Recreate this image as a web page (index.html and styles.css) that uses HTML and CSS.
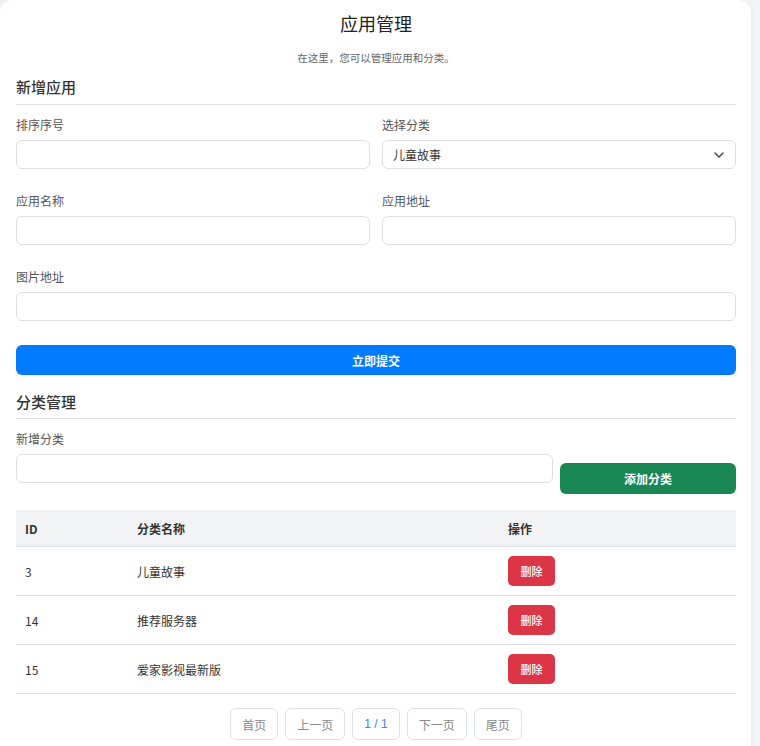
FILE: index.html
```html
<!DOCTYPE html>
<html lang="zh-CN">
<head>
  <meta charset="UTF-8">
  <meta name="viewport" content="width=device-width, initial-scale=1.0">
  <title>应用管理</title>
  <link rel="stylesheet" href="styles.css">
</head>
<body>
  <div class="container">
    <h1>应用管理</h1>
    <p class="subtitle">在这里，您可以管理应用和分类。</p>

    <h2 class="section-title">新增应用</h2>
    <form id="app-form">
      <div class="form-row">
        <div class="form-group">
          <label for="sort">排序序号</label>
          <input type="text" id="sort" name="sort">
        </div>
        <div class="form-group">
          <label for="category">选择分类</label>
          <div class="select-wrap">
            <select id="category" name="category">
              <option>儿童故事</option>
              <option>推荐服务器</option>
              <option>爱家影视最新版</option>
            </select>
            <svg class="select-arrow" width="10" height="6" viewBox="0 0 10 6"><path d="M1 1l4 4 4-4" fill="none" stroke="#343a40" stroke-width="1.3" stroke-linecap="round" stroke-linejoin="round"/></svg>
          </div>
        </div>
      </div>
      <div class="form-row">
        <div class="form-group">
          <label for="name">应用名称</label>
          <input type="text" id="name" name="name">
        </div>
        <div class="form-group">
          <label for="url">应用地址</label>
          <input type="text" id="url" name="url">
        </div>
      </div>
      <div class="form-group last">
        <label for="img">图片地址</label>
        <input type="text" id="img" name="img">
      </div>
      <button type="submit" class="btn btn-primary btn-block">立即提交</button>
    </form>

    <h2 class="section-title section-gap">分类管理</h2>
    <div class="category-add">
      <div class="form-group grow">
        <label for="new-cat">新增分类</label>
        <input type="text" id="new-cat" name="new-cat">
      </div>
      <button type="button" class="btn btn-success add-cat">添加分类</button>
    </div>

    <table class="cat-table">
      <thead>
        <tr>
          <th class="col-id">ID</th>
          <th class="col-name">分类名称</th>
          <th>操作</th>
        </tr>
      </thead>
      <tbody>
        <tr>
          <td>3</td>
          <td>儿童故事</td>
          <td><button type="button" class="btn btn-danger">删除</button></td>
        </tr>
        <tr>
          <td>14</td>
          <td>推荐服务器</td>
          <td><button type="button" class="btn btn-danger">删除</button></td>
        </tr>
        <tr>
          <td>15</td>
          <td>爱家影视最新版</td>
          <td><button type="button" class="btn btn-danger">删除</button></td>
        </tr>
      </tbody>
    </table>

    <div class="pagination">
      <button type="button" class="page-btn">首页</button>
      <button type="button" class="page-btn">上一页</button>
      <span class="page-btn current">1 / 1</span>
      <button type="button" class="page-btn">下一页</button>
      <button type="button" class="page-btn">尾页</button>
    </div>
  </div>
</body>
</html>
```

FILE: styles.css
```css
body {
  margin: 0;
  background: #f3f4f6;
  font-family: "Noto Sans CJK SC", "Noto Sans", sans-serif;
  color: #333;
}
.container {
  width: 751px;
  box-sizing: border-box;
  background: #fff;
  border-radius: 12px;
  padding: 10px 15px 20px 16px;
  box-shadow: 0 0 6px rgba(0, 0, 0, 0.06);
}
h1 {
  text-align: center;
  font-size: 18px;
  font-weight: 400;
  line-height: 27px;
  margin: 0;
  color: #222;
}
.subtitle {
  text-align: center;
  font-size: 10.5px;
  line-height: 16px;
  color: #666;
  margin: 13px 0 10px;
}
.section-title {
  font-size: 15px;
  font-weight: 500;
  line-height: 22px;
  margin: 0 0 11px;
  padding-bottom: 6px;
  border-bottom: 1px solid #dee2e6;
  color: #333;
}
.section-gap {
  margin-top: 16px;
  padding-bottom: 5px;
}
.form-row {
  display: flex;
  gap: 12px;
}
.form-row .form-group {
  flex: 1;
}
.form-group {
  margin-bottom: 23px;
}
.form-group.last {
  margin-bottom: 24px;
}
label {
  display: block;
  font-size: 12px;
  line-height: 18px;
  color: #555;
  margin-bottom: 6px;
}
input[type="text"],
select {
  display: block;
  width: 100%;
  height: 29px;
  box-sizing: border-box;
  padding: 0 10px;
  border: 1px solid #dcdfe4;
  border-radius: 6px;
  font-family: inherit;
  font-size: 12px;
  color: #333;
  background: #fff;
  outline: none;
}
.select-wrap {
  position: relative;
}
select {
  -webkit-appearance: none;
  appearance: none;
}
.select-arrow {
  position: absolute;
  right: 12px;
  top: 12px;
  pointer-events: none;
}
.btn {
  border: none;
  border-radius: 6px;
  color: #fff;
  font-family: inherit;
  font-size: 12px;
  font-weight: 700;
  cursor: pointer;
}
.btn-block {
  display: block;
  width: 100%;
  height: 30px;
}
.btn-primary {
  background: #007bff;
}
.btn-primary:hover {
  background: #0069d9;
}
.btn-success {
  background: #198754;
}
.btn-danger {
  background: #dc3545;
  font-size: 11px;
  font-weight: 500;
  width: 47px;
  height: 30px;
  border-radius: 5px;
}
.category-add {
  display: flex;
  align-items: flex-start;
  gap: 7px;
}
.grow {
  flex: 1;
  margin-bottom: 27px;
}
.add-cat {
  width: 176px;
  height: 31px;
  margin-top: 33px;
}
.cat-table {
  width: 100%;
  border-collapse: collapse;
  font-size: 12px;
}
.cat-table th {
  background: #f1f3f5;
  text-align: left;
  font-weight: 700;
  height: 36px;
  padding: 0 9px;
  color: #333;
  border-bottom: 1px solid #dee2e6;
}
.cat-table td {
  height: 48px;
  padding: 0 9px;
  border-bottom: 1px solid #dee2e6;
  color: #333;
}
.col-id {
  width: 94px;
}
.col-name {
  width: 353px;
}
.pagination {
  display: flex;
  justify-content: center;
  gap: 7px;
  margin-top: 14px;
}
.page-btn {
  display: inline-flex;
  align-items: center;
  justify-content: center;
  height: 32px;
  box-sizing: border-box;
  padding: 0 11px;
  border: 1px solid #dee2e6;
  border-radius: 6px;
  background: #fff;
  font-family: inherit;
  font-size: 12px;
  color: #888;
}
.page-btn.current {
  color: #3b82f6;
  padding: 0 11px;
  font-family: "Liberation Sans", Arial, sans-serif;
}
```
